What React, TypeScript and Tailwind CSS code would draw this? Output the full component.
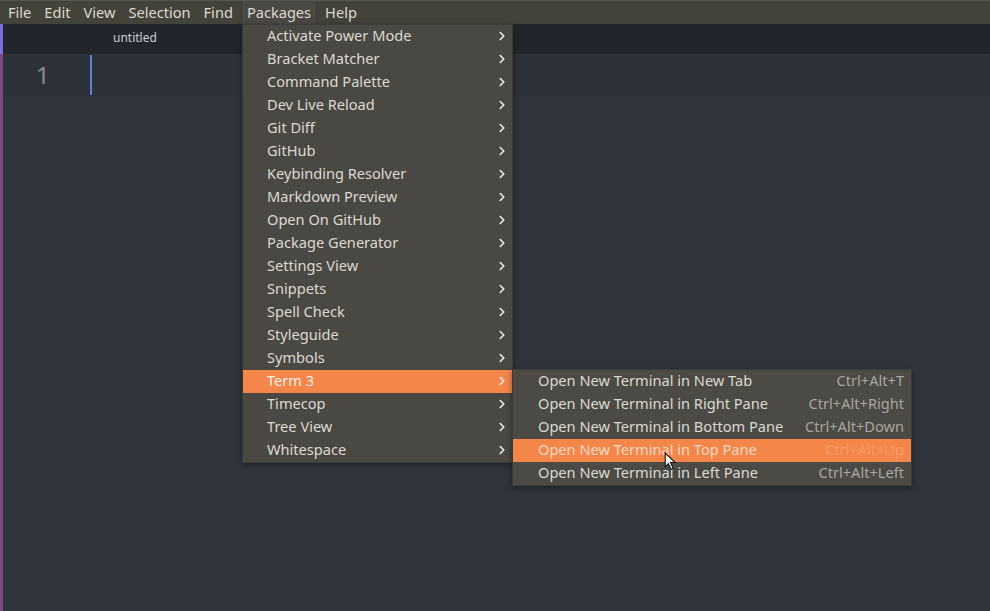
import { ChevronRight } from "lucide-react";

const menuBar = ["File", "Edit", "View", "Selection", "Find", "Packages", "Help"];

const packages = [
  "Activate Power Mode",
  "Bracket Matcher",
  "Command Palette",
  "Dev Live Reload",
  "Git Diff",
  "GitHub",
  "Keybinding Resolver",
  "Markdown Preview",
  "Open On GitHub",
  "Package Generator",
  "Settings View",
  "Snippets",
  "Spell Check",
  "Styleguide",
  "Symbols",
  "Term 3",
  "Timecop",
  "Tree View",
  "Whitespace",
];

const termItems = [
  { label: "Open New Terminal in New Tab", keys: "Ctrl+Alt+T" },
  { label: "Open New Terminal in Right Pane", keys: "Ctrl+Alt+Right" },
  { label: "Open New Terminal in Bottom Pane", keys: "Ctrl+Alt+Down" },
  { label: "Open New Terminal in Top Pane", keys: "Ctrl+Alt+Up" },
  { label: "Open New Terminal in Left Pane", keys: "Ctrl+Alt+Left" },
];

const App = () => {
  return (
    <div
      className="relative w-[990px] h-[611px] overflow-hidden bg-[#30353d] text-[#dcd9d1]"
      style={{ fontFamily: '"Noto Sans", "Open Sans", sans-serif' }}
    >
      {/* menu bar */}
      <div className="h-[24px] flex items-center gap-[13px] px-[8px] bg-[#43433a] border-t border-[#55574f] text-[14.6px]">
        {menuBar.map((m) =>
          m === "Packages" ? (
            <div
              key={m}
              className="h-full flex items-center -mx-[5px] px-[5px] bg-[#4a4943] border-x border-[#3a3a34]"
            >
              {m}
            </div>
          ) : (
            <span key={m}>{m}</span>
          )
        )}
      </div>

      <div className="flex h-[587px]">
        {/* left accent line */}
        <div className="w-[3px] flex flex-col">
          <div className="h-[30px] bg-[#7b6fd9]" />
          <div className="flex-1 bg-[#7d4a80]" />
        </div>

        <div className="flex-1 flex flex-col">
          {/* tab bar */}
          <div className="h-[30px] bg-[#22262c] flex items-center">
            <span className="ml-[110px] pb-[2px] text-[12px] text-[#c9ccd2]">untitled</span>
          </div>
          {/* editor */}
          <div className="flex-1 bg-[#30353d]">
            <div className="h-[42px] bg-[#2d3239] flex items-center">
              <span className="ml-[33px] w-[14px] text-[24px] text-[#868b93]">1</span>
              <div className="ml-[40px] w-[2px] h-[40px] bg-[#5d7de6]" />
            </div>
          </div>
        </div>
      </div>

      {/* Packages dropdown */}
      <div className="absolute left-[242px] top-[24px] w-[271px] bg-[#4a4843] border border-[#3b3a36] shadow-[0_2px_6px_rgba(0,0,0,0.4)] text-[14.6px]">
        {packages.map((p) => (
          <div
            key={p}
            className={
              "h-[23px] flex items-center justify-between pl-[24px] pr-[3px] pb-[2px] " +
              (p === "Term 3" ? "bg-[#f5864a] text-[#fff1e6]" : "")
            }
          >
            <span>{p}</span>
            <ChevronRight size={14} strokeWidth={2.75} className="text-[#eeebe4]" />
          </div>
        ))}
      </div>

      {/* Term 3 submenu */}
      <div className="absolute left-[512px] top-[369px] w-[400px] bg-[#4b4a45] border border-[#3b3a36] shadow-[0_2px_6px_rgba(0,0,0,0.4)] text-[14.6px]">
        {termItems.map((t) => {
          const active = t.keys === "Ctrl+Alt+Up";
          return (
            <div
              key={t.label}
              className={
                "h-[23px] flex items-center justify-between pl-[25px] pr-[7px] pb-[2px] " +
                (active ? "bg-[#f5864a] text-[#ffd9c2]" : "")
              }
            >
              <span>{t.label}</span>
              <span className={active ? "text-[#f89a68]" : "text-[#a9a7a0]"}>{t.keys}</span>
            </div>
          );
        })}
      </div>

      {/* mouse pointer */}
      <svg className="absolute left-[664px] top-[452px]" width="13" height="19" viewBox="0 0 12 18">
        <path d="M1 1 L1 14 L4 11 L6.5 16.5 L8.5 15.5 L6 10 L10.5 10 Z" fill="#f4f4f4" stroke="#111" strokeWidth="1" />
      </svg>
    </div>
  );
};

export default App;
